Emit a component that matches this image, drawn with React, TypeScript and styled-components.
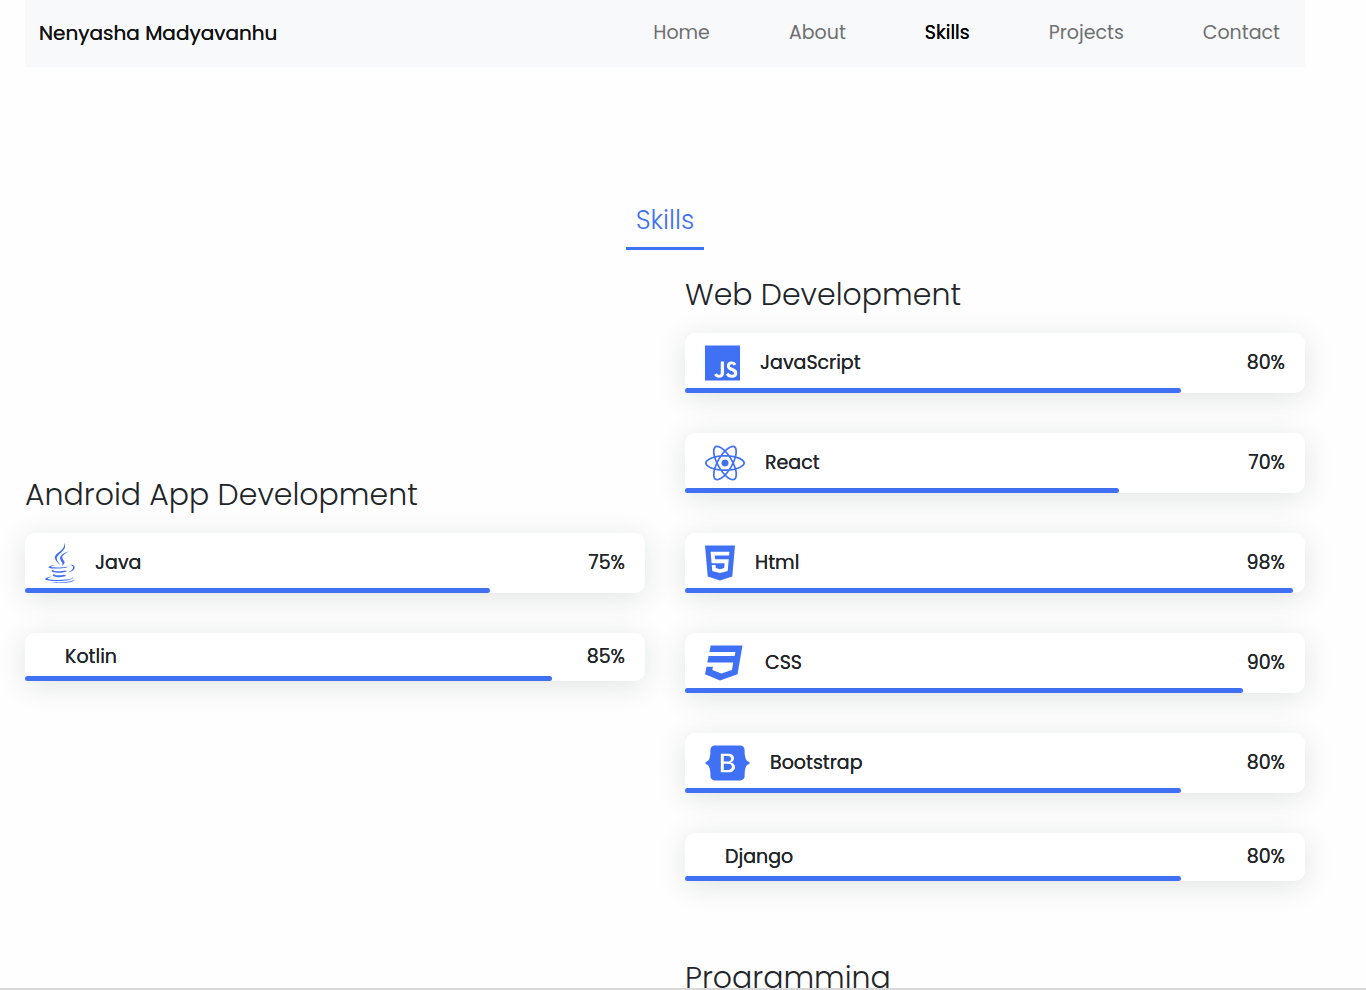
import React from "react";
import styled, { createGlobalStyle } from "styled-components";
import type { IconType } from "react-icons";
import { FaBootstrap, FaCss3, FaHtml5, FaJava, FaJs, FaReact } from "react-icons/fa6";

const GlobalStyle = createGlobalStyle`
  * { box-sizing: border-box; }
  body {
    margin: 0;
    background: #fefefe;
    color: #212529;
    font-family: Poppins, Inter, sans-serif;
  }
`;

const Page = styled.div`
  height: 100vh;
  overflow: hidden;
  padding: 0 61px 0 25px;
  border-bottom: 2px solid #d8d8d8;
`;

const Header = styled.header`
  display: flex;
  align-items: center;
  justify-content: space-between;
  height: 67px;
  padding: 0 25px 2px 14px;
  background: #f8f9fb;
`;

const Brand = styled.a`
  color: #111111;
  font-size: 20px;
  font-weight: 400;
  line-height: 32px;
  text-decoration: none;
  text-shadow: 0 0 0 currentColor;
`;

const Nav = styled.nav`
  display: flex;
  gap: 79px;
`;

const NavLink = styled.a<{ $active: boolean }>`
  color: ${(p) => (p.$active ? "#000000" : "#6e6f70")};
  font-size: 19px;
  font-weight: 400;
  line-height: 32px;
  text-decoration: none;
  text-shadow: ${(p) => (p.$active ? "0 0 0 currentColor" : "none")};
`;

const Title = styled.h1`
  width: max-content;
  margin: 130px auto 22px;
  padding: 5px 10px 8px;
  border-bottom: 3px solid #4070f4;
  color: #4070f4;
  font-size: 26px;
  font-weight: 300;
  line-height: 37px;
`;

const Groups = styled.main`
  display: grid;
  grid-template-columns: 1fr 1fr;
  align-items: center;
  gap: 74px 40px;
`;

const Group = styled.section`
  display: flex;
  flex-direction: column;
  gap: 40px;

  &:last-child {
    grid-column: 2;
  }
`;

const GroupTitle = styled.h2`
  margin: 0 0 -24px;
  font-size: 30px;
  font-weight: 300;
  line-height: 45px;
`;

const Card = styled.article`
  position: relative;
  display: flex;
  align-items: center;
  gap: 20px;
  padding: 10px 20px;
  border-radius: 10px;
  background: #ffffff;
  box-shadow: 0 5px 30px rgba(16, 32, 32, 0.12);
  font-size: 19px;
  font-weight: 400;
  line-height: 28px;
  text-shadow: 0 0 0 currentColor;
`;

const IconSlot = styled.span<{ $width: number }>`
  display: flex;
  width: ${(p) => p.$width}px;
  color: #4070f4;

  svg {
    width: 100%;
    height: 40px;
  }
`;

const Percent = styled.span`
  margin-left: auto;
`;

const Bar = styled.div`
  position: absolute;
  bottom: 0;
  left: 0;
  height: 5px;
  border-radius: 3px;
  background: #4070f4;
`;

type Skill = { name: string; value: number; icon?: IconType; iconWidth?: number };

const android: Skill[] = [
  { name: "Java", value: 75, icon: FaJava, iconWidth: 30 },
  { name: "Kotlin", value: 85 },
];

const web: Skill[] = [
  { name: "JavaScript", value: 80, icon: FaJs, iconWidth: 35 },
  { name: "React", value: 70, icon: FaReact, iconWidth: 40 },
  { name: "Html", value: 98, icon: FaHtml5, iconWidth: 30 },
  { name: "CSS", value: 90, icon: FaCss3, iconWidth: 40 },
  { name: "Bootstrap", value: 80, icon: FaBootstrap, iconWidth: 45 },
  { name: "Django", value: 80 },
];

const links = ["Home", "About", "Skills", "Projects", "Contact"];

function SkillGroup({ title, skills }: { title: string; skills: Skill[] }) {
  return (
    <Group>
      <GroupTitle>{title}</GroupTitle>
      {skills.map(({ name, value, icon: Icon, iconWidth = 0 }) => (
        <Card key={name}>
          <IconSlot $width={iconWidth}>{Icon && <Icon aria-hidden />}</IconSlot>
          <span>{name}</span>
          <Percent>{value}%</Percent>
          <Bar
            role="progressbar"
            aria-label={name}
            aria-valuenow={value}
            style={{ width: `${value}%` }}
          />
        </Card>
      ))}
    </Group>
  );
}

export default function App() {
  return (
    <Page>
      <GlobalStyle />
      <Header>
        <Brand href="#home">Nenyasha Madyavanhu</Brand>
        <Nav>
          {links.map((link) => (
            <NavLink key={link} href={`#${link.toLowerCase()}`} $active={link === "Skills"}>
              {link}
            </NavLink>
          ))}
        </Nav>
      </Header>
      <Title>Skills</Title>
      <Groups>
        <SkillGroup title="Android App Development" skills={android} />
        <SkillGroup title="Web Development" skills={web} />
        <SkillGroup title="Programming" skills={[]} />
      </Groups>
    </Page>
  );
}
